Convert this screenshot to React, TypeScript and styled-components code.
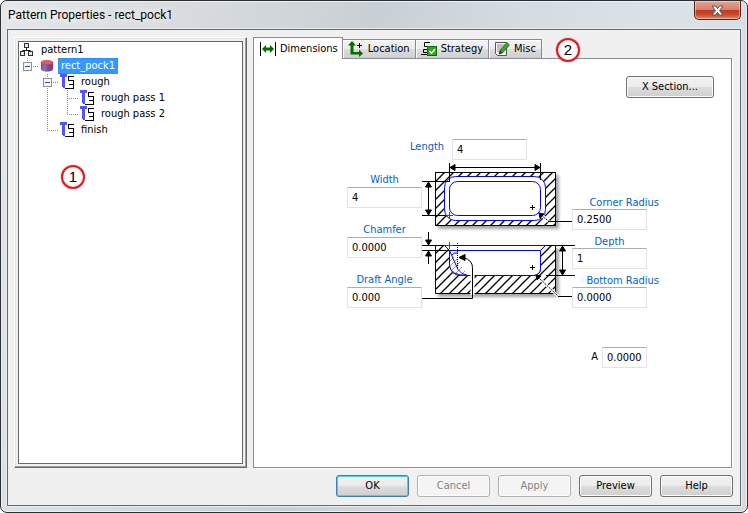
import React, { useState } from "react";
import styled, { createGlobalStyle, css } from "styled-components";

const Global = createGlobalStyle`
  * { box-sizing: border-box; }
  body { margin: 0; background: #fff; }
  body, button, input {
    font-family: "DejaVu Sans Condensed", "Liberation Sans", sans-serif;
    font-size: 11px;
    line-height: 14px;
    color: #000;
  }
`;

const Frame = styled.div`
  min-height: 100vh;
  display: flex;
  flex-direction: column;
  padding: 0 6px 6px;
  border: 1px solid #2b2e31;
  border-radius: 7px;
  background: linear-gradient(100deg, #e4e6e8 0%, #d6dade 25%, #c9d0d5 45%, #d5dce1 62%, #dce3e8 80%, #d3dbe0 100%);
  box-shadow: inset 0 0 0 1px #eef1f3;
`;

const TitleBar = styled.header`
  height: 28px;
  flex: none;
  display: flex;
  justify-content: space-between;
  align-items: flex-start;
`;

const Title = styled.h1`
  margin: 0;
  padding-left: 1px;
  font: 12px/28px Roboto, "Noto Sans", sans-serif;
  text-shadow: 0 0 8px #fff, 0 0 8px #fff;
`;

const CloseButton = styled.button`
  width: 47px;
  height: 19px;
  padding: 0;
  display: flex;
  align-items: center;
  justify-content: center;
  border: 1px solid #55201b;
  border-top: 0;
  border-radius: 0 0 5px 5px;
  background: linear-gradient(#e4a594 0%, #d5806b 48%, #bd3a20 50%, #c94a2c 75%, #e08a62 100%);
  box-shadow: inset 0 0 0 1px rgba(255, 255, 255, 0.4);
`;

const Client = styled.main`
  flex: 1;
  display: flex;
  flex-direction: column;
  gap: 7px;
  padding: 7px 7px 8px 6px;
  border: 1px solid #66696b;
  background: #f0f0f0;
  box-shadow: 0 0 0 1px #e9edf0;
`;

const Columns = styled.div`
  flex: 1;
  display: grid;
  grid-template-columns: 233px minmax(0, 1fr);
  gap: 6px;
`;

const TreePanel = styled.section`
  position: relative;
  display: flex;
  padding: 3px;
  border: 1px solid;
  border-color: #fff #696969 #696969 #fff;
  box-shadow: inset -1px -1px #a0a0a0, inset 1px 1px #e3e3e3;
`;

const Tree = styled.ul`
  flex: 1;
  margin: 0;
  padding: 0;
  list-style: none;
  border: 1px solid #696969;
  background: #fff;
`;

const TreeRow = styled.li`
  height: 16px;
  display: flex;
  svg { display: block; flex: none; }
`;

const TreeLabel = styled.span<{ $selected?: boolean }>`
  padding: 1px 3px;
  white-space: nowrap;
  ${(p) =>
    p.$selected &&
    css`
      color: #fff;
      background: #3399ff;
      outline: 1px dotted #cc6600;
      outline-offset: -1px;
    `}
`;

const Callout = styled.span`
  position: absolute;
  width: 24px;
  height: 24px;
  border: 2px solid #dd1a22;
  border-radius: 50%;
  background: radial-gradient(#fff 50%, #f6d8d8 100%);
  font: 15px/20px "Liberation Sans", sans-serif;
  text-align: center;
  box-shadow: 0 0 1px #dd1a22;
`;

const TreeCallout = styled(Callout)`
  left: 46px;
  top: 127px;
`;

const TabCallout = styled(Callout)`
  left: 100%;
  top: 1px;
  margin-left: 14px;
`;

const Sheet = styled.section`
  display: flex;
  flex-direction: column;
  margin-right: 1px;
`;

const TabList = styled.div`
  position: relative;
  align-self: flex-start;
  height: 21px;
  display: flex;
  align-items: flex-end;
`;

const Tab = styled.button<{ $active: boolean }>`
  height: 19px;
  display: flex;
  align-items: center;
  gap: 4px;
  padding: 0 5px;
  border: 1px solid #898c95;
  border-left-width: 0;
  border-bottom: 0;
  background: linear-gradient(#f3f3f3 0%, #ebebeb 50%, #dddddd 51%, #cfcfcf 100%);
  box-shadow: inset 1px 1px #fcfcfc;
  svg { display: block; flex: none; }
  ${(p) =>
    p.$active &&
    css`
      position: relative;
      height: 22px;
      margin-bottom: -1px;
      padding: 0 4px 0 6px;
      border-left-width: 1px;
      background: #fff;
    `}
`;

const Pane = styled.div`
  flex: 1;
  display: flex;
  flex-direction: column;
  padding: 17px 17px 0;
  border: 1px solid #898c95;
  background: #fff;
  box-shadow: 1px 1px #fff;
`;

const PushButton = styled.button<{ $primary?: boolean }>`
  min-width: 73px;
  height: 22px;
  padding: 0 14px;
  border: 1px solid ${(p) => (p.$primary ? "#3c7fb1" : "#707070")};
  border-radius: 3px;
  background: linear-gradient(#f2f2f2 0%, #ebebeb 50%, #dddddd 51%, #cfcfcf 100%);
  box-shadow: inset 0 0 0 1px ${(p) => (p.$primary ? "#48d1f5" : "#fcfcfc")};
  &:disabled {
    color: #838383;
    border-color: #adb2b5;
    background: #f4f4f4;
  }
`;

const SectionButton = styled(PushButton)`
  align-self: flex-end;
  padding: 0 15px;
  margin-bottom: 41px;
`;

const Footer = styled.footer`
  display: flex;
  justify-content: flex-end;
  gap: 8px;
`;

const Dimensions = styled.div`
  align-self: center;
  margin-left: 21px;
  display: grid;
  grid-template-columns: 75px 150px 87px;
`;

const LengthRow = styled.div`
  grid-column: 1 / -1;
  display: flex;
  align-items: center;
  padding-left: 63px;
`;

const LeftFields = styled.div`
  display: flex;
  flex-direction: column;
  gap: 16px;
  padding-top: 14px;
`;

const RightFields = styled.div`
  display: flex;
  flex-direction: column;
  gap: 7px;
  padding-top: 38px;
  label { line-height: 12px; }
`;

const ExtraRow = styled.div`
  grid-column: 1 / -1;
  display: flex;
  justify-content: flex-end;
  align-items: center;
  gap: 4px;
  padding: 40px 12px 0 0;
`;

const FieldGroup = styled.div`
  display: flex;
  flex-direction: column;
`;

const FieldLabel = styled.label<{ $align?: "right" | "center" }>`
  width: ${(p) => (p.$align === "right" ? "87px" : "75px")};
  text-align: ${(p) => p.$align ?? "center"};
  white-space: nowrap;
  color: #0063c0;
`;

const LengthLabel = styled(FieldLabel)`
  width: 42px;
  text-align: left;
  margin-bottom: 4px;
`;

const TextBox = styled.input<{ $narrow?: boolean }>`
  width: ${(p) => (p.$narrow ? "45px" : "75px")};
  height: 21px;
  margin-bottom: -1px;
  padding: 0 4px;
  border: 1px solid #e2e3ea;
  border-top-color: #abadb3;
  border-radius: 1px;
  background: #fff;
`;

const Drawing = styled.svg`
  display: block;
  overflow: visible;
`;

type GuideKind = "blank" | "line" | "tee" | "corner" | "rootNode" | "node";

function Guide({ kind }: { kind: GuideKind }) {
  const dots = { stroke: "#8c8c8c", strokeDasharray: "1 1", fill: "none" };
  const box = kind === "node" || kind === "rootNode";
  return (
    <svg width="20" height="16" viewBox="0 0 20 16" shapeRendering="crispEdges" aria-hidden="true">
      {(kind === "line" || kind === "tee" || kind === "node") && <path d="M8.5 0V16" {...dots} />}
      {(kind === "corner" || kind === "rootNode") && <path d="M8.5 0V9" {...dots} />}
      {kind !== "blank" && kind !== "line" && <path d="M8 8.5H20" {...dots} />}
      {box && (
        <>
          <rect x="4.5" y="4.5" width="8" height="8" fill="#f6f6f6" stroke="#919191" />
          <path d="M6 8.5h5" stroke="#2b4fa8" />
        </>
      )}
    </svg>
  );
}

const PatternIcon = () => (
  <svg width="19" height="16" viewBox="0 0 19 16" aria-hidden="true">
    <path d="M7.5 5.5v3M3.5 10.5v-2h8v2" fill="none" stroke="#222" />
    <g fill="#dce8ff" stroke="#2d3138">
      <rect x="5.5" y="1.5" width="4" height="4" />
      <rect x="1.5" y="9.5" width="4" height="4" />
      <rect x="9.5" y="9.5" width="4" height="4" />
    </g>
  </svg>
);

const PocketIcon = () => (
  <svg width="19" height="16" viewBox="0 0 19 16" aria-hidden="true">
    <defs>
      <linearGradient id="pocketSide">
        <stop offset="0" stopColor="#c9365a" />
        <stop offset="0.3" stopColor="#7778c0" />
        <stop offset="0.65" stopColor="#5654a0" />
        <stop offset="1" stopColor="#c52a45" />
      </linearGradient>
    </defs>
    <path d="M2 4v7c0 3.500 12 3.500 12 0V4z" fill="url(#pocketSide)" />
    <ellipse cx="8" cy="4.5" rx="6" ry="2.2" fill="#e25a67" stroke="#c83650" strokeWidth="0.6" />
  </svg>
);

const ToolpathIcon = () => (
  <svg width="19" height="16" viewBox="0 0 19 16" shapeRendering="crispEdges" aria-hidden="true">
    <path d="M1 0h7v3H6v10l-1 1H4l-1-1V3H1z" fill="#5555ff" />
    <path d="M15 2.5H9.5V6.5H14.5V10.5H9.5M14.5 10.5V14.5H6" fill="none" stroke="#000" />
  </svg>
);

const DimensionsIcon = () => (
  <svg width="16" height="16" viewBox="0 0 16 16" aria-hidden="true">
    <path d="M0.5 1v14M15.5 1v14" stroke="#000" />
    <path d="M2 8l4-4v2.500h4V4l4 4-4 4V9.500H6V12z" fill="#007000" />
  </svg>
);

const LocationIcon = () => (
  <svg width="16" height="16" viewBox="0 0 16 16" aria-hidden="true">
    <path d="M4 0l4 4.500H5.500V11H11V8.500l4 4-4 3.500v-2.500H2.500v-9H0z" fill="#007000" />
    <path d="M9 4.500h5M11.500 2v5" stroke="#000" />
  </svg>
);

const StrategyIcon = () => (
  <svg width="16" height="16" viewBox="0 0 16 16" aria-hidden="true">
    <path d="M9 1.500H3.500v4H9v3M7 8.500H2.500v3H7M0 13.500h7" fill="none" stroke="#000" />
    <rect x="6.5" y="5.5" width="9" height="9" fill="#35a51e" stroke="#126c0b" />
    <path d="M8.500 10l2 2.200 3.500-4" fill="none" stroke="#fff" strokeWidth="1.5" />
  </svg>
);

const MiscIcon = () => (
  <svg width="16" height="16" viewBox="0 0 16 16" aria-hidden="true">
    <path d="M1.500 1.500h11v13h-9l-2-2z" fill="#f7f7f7" stroke="#555" />
    <path d="M3 4h8M3 6h7M3 8h5M3 10h4" stroke="#8a8a8a" />
    <path d="M5 13l1-3.500 7-8L15.500 4l-7 8z" fill="#3ba52c" stroke="#155f12" strokeWidth="0.7" />
    <path d="M5 13l1-3.500L8.500 12z" fill="#333" />
  </svg>
);

function PocketDrawing() {
  return (
    <Drawing width="150" height="148" viewBox="0 0 150 148" role="img" aria-label="Rectangular pocket, top view and section">
      <defs>
        <pattern id="hatch" width="9" height="9" patternUnits="userSpaceOnUse">
          <rect width="9" height="9" fill="#fff" />
          <path d="M-1 10L10 -1M-2 2L2 -2M7 11L11 7" stroke="#000" strokeWidth="1.3" />
        </pattern>
        <filter id="drop" x="-10%" y="-10%" width="125%" height="135%">
          <feDropShadow dx="3" dy="3" stdDeviation="1.5" floodColor="#000" floodOpacity="0.35" />
        </filter>
      </defs>

      <g filter="url(#drop)">
        <rect x="13.5" y="13.5" width="120" height="53" fill="url(#hatch)" stroke="#000" />
        <path d="M13.5 86.5h9l5 5v14q1 11 12 11h72q7-1 7-7v-18l5-5h10v48h-120z" fill="url(#hatch)" stroke="#000" />
      </g>
      <rect x="22.5" y="17.5" width="101" height="44" rx="11" fill="#fff" stroke="#00f" />
      <rect x="27.5" y="22.5" width="91" height="34" rx="8" fill="#fff" stroke="#00f" />

      <path d="M22.5 86.5h101l-5 5v18q0 6-7 7H44q-16 0-16.500-10v-15z" fill="#fff" />
      <path d="M28 102l4-4M28 107l7-7M30 111l8-8M33 115l7-7M39 116l4-4" stroke="#999" />
      <path
        d="M22.5 86.5h101l-5 5v18q0 6-7 7H46q-7-1-10-6l-8.500-19zM27.5 91.500h91M27.500 91.500v15q1 10 18 10"
        fill="none"
        stroke="#00f"
      />

      <path
        d="M0 22.500h27M0 56.500h24M27.500 4v19M118.500 4v17M27 8.500h92M6.500 22v35M0 86.500h22M0 91.500h27M6.500 73v13M6.500 92v13M124 86.500h29M124 116.500h29M140.500 87v29"
        fill="none"
        stroke="#000"
      />
      <path d="M35.500 84v26" stroke="#000" strokeDasharray="1 1" />
      <path d="M30 96q2-3 6-2" fill="none" stroke="#000" />
      <path d="M50.500 115v21" stroke="#fff" strokeWidth="4" />
      <path d="M0 139.500h50.500v-31q0-7-9-10" fill="none" stroke="#000" />
      <path d="M119 56l8 6.500M116 118l20 19" stroke="#fff" strokeWidth="3" />
      <path d="M119 56l8 6.500M116 118l20 19" stroke="#000" strokeDasharray="2 1" />
      <path d="M126 62.500H150M136 137.500H150" stroke="#000" />
      <path
        d="M28 8.500l5-3v6zM118 8.500l-5-3v6zM6.500 23l-3 5h6zM6.500 56l-3-5h6zM6.500 86l-3-5h6zM6.500 92l-3 5h6zM140.500 87l-3 5h6zM140.500 116l-3-5h6zM37 98.500l6-3v6zM117 54l5 1-4 4zM114 116l5 1-4 4z"
        fill="#000"
        stroke="#000"
      />
      <path d="M108 48.500h5M110.500 46v5M108 108.500h5M110.500 106v5" stroke="#000" />
      <path d="M24 56.500h7M27.500 53v7M24 86.500h7M27.500 83v7" stroke="#f00" />
    </Drawing>
  );
}

function Field({ id, label, value, align }: { id: string; label: string; value: string; align?: "right" | "center" }) {
  return (
    <FieldGroup>
      <FieldLabel htmlFor={id} $align={align}>{label}</FieldLabel>
      <TextBox id={id} defaultValue={value} />
    </FieldGroup>
  );
}

const treeRows: { label: string; icon: () => React.ReactElement; guides: GuideKind[] }[] = [
  { label: "pattern1", icon: PatternIcon, guides: [] },
  { label: "rect_pock1", icon: PocketIcon, guides: ["rootNode"] },
  { label: "rough", icon: ToolpathIcon, guides: ["blank", "node"] },
  { label: "rough pass 1", icon: ToolpathIcon, guides: ["blank", "line", "tee"] },
  { label: "rough pass 2", icon: ToolpathIcon, guides: ["blank", "line", "corner"] },
  { label: "finish", icon: ToolpathIcon, guides: ["blank", "corner"] },
];

const tabs = [
  { label: "Dimensions", icon: DimensionsIcon },
  { label: "Location", icon: LocationIcon },
  { label: "Strategy", icon: StrategyIcon },
  { label: "Misc", icon: MiscIcon },
];

export default function App() {
  const [active, setActive] = useState("Dimensions");
  const [selected, setSelected] = useState("rect_pock1");
  return (
    <>
      <Global />
      <Frame>
        <TitleBar>
          <Title>Pattern Properties - rect_pock1</Title>
          <CloseButton type="button" aria-label="Close">
            <svg width="13" height="11" viewBox="0 0 13 11" aria-hidden="true">
              <path d="M1 1h3.500l2 2.500L8.500 1H12L8.500 5.500 12 10H8.500l-2-2.500-2 2.500H1l3.500-4.500z" fill="#fff" stroke="#4d5566" />
            </svg>
          </CloseButton>
        </TitleBar>
        <Client>
          <Columns>
            <TreePanel>
              <Tree role="tree">
                {treeRows.map(({ label, icon: Icon, guides }) => (
                  <TreeRow
                    key={label}
                    role="treeitem"
                    aria-level={guides.length + 1}
                    aria-selected={label === selected}
                    onClick={() => setSelected(label)}
                  >
                    {guides.map((kind, i) => (
                      <Guide key={i} kind={kind} />
                    ))}
                    <Icon />
                    <TreeLabel $selected={label === selected}>{label}</TreeLabel>
                  </TreeRow>
                ))}
              </Tree>
              <TreeCallout>1</TreeCallout>
            </TreePanel>
            <Sheet>
              <TabList role="tablist">
                {tabs.map(({ label, icon: Icon }) => (
                  <Tab
                    key={label}
                    type="button"
                    role="tab"
                    aria-selected={label === active}
                    $active={label === active}
                    onClick={() => setActive(label)}
                  >
                    <Icon />
                    {label}
                  </Tab>
                ))}
                <TabCallout>2</TabCallout>
              </TabList>
              <Pane role="tabpanel">
                <SectionButton type="button">X Section...</SectionButton>
                <Dimensions>
                  <LengthRow>
                    <LengthLabel htmlFor="length">Length</LengthLabel>
                    <TextBox id="length" defaultValue="4" />
                  </LengthRow>
                  <LeftFields>
                    <Field id="width" label="Width" value="4" />
                    <Field id="chamfer" label="Chamfer" value="0.0000" />
                    <Field id="draft" label="Draft Angle" value="0.000" />
                  </LeftFields>
                  <PocketDrawing />
                  <RightFields>
                    <Field id="corner" label="Corner Radius" value="0.2500" align="right" />
                    <Field id="depth" label="Depth" value="1" />
                    <Field id="bottom" label="Bottom Radius" value="0.0000" align="right" />
                  </RightFields>
                  <ExtraRow>
                    <label htmlFor="angle">A</label>
                    <TextBox id="angle" defaultValue="0.0000" $narrow />
                  </ExtraRow>
                </Dimensions>
              </Pane>
            </Sheet>
          </Columns>
          <Footer>
            <PushButton type="button" $primary>OK</PushButton>
            <PushButton type="button" disabled>Cancel</PushButton>
            <PushButton type="button" disabled>Apply</PushButton>
            <PushButton type="button">Preview</PushButton>
            <PushButton type="button">Help</PushButton>
          </Footer>
        </Client>
      </Frame>
    </>
  );
}
